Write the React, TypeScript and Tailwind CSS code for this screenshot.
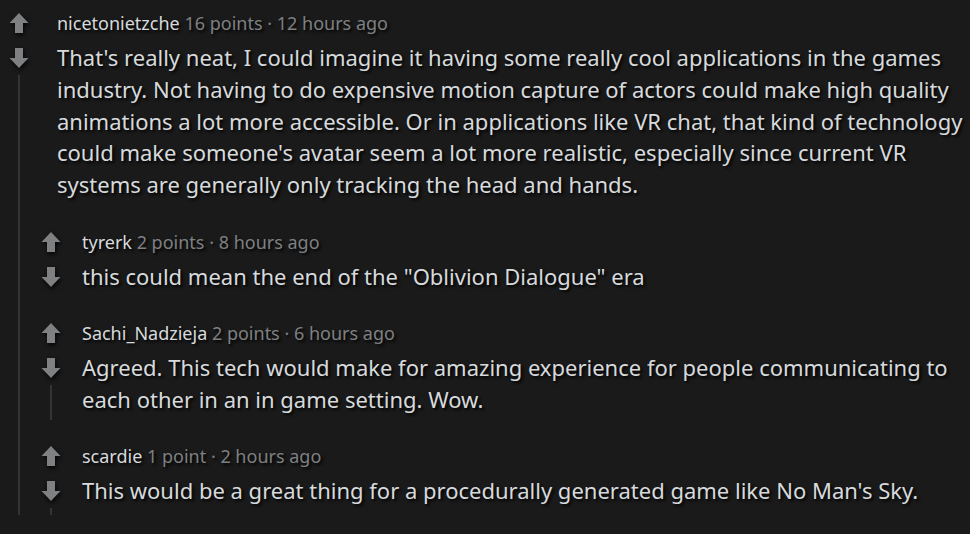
import React from 'react'

type Comment = {
  user: string
  points: string
  time: string
  body: string
  thread?: 'long' | 'stub' | 'none'
}

const reply: Comment[] = [
  {
    user: 'tyrerk',
    points: '2 points',
    time: '8 hours ago',
    body: 'this could mean the end of the "Oblivion Dialogue" era',
    thread: 'none',
  },
  {
    user: 'Sachi_Nadzieja',
    points: '2 points',
    time: '6 hours ago',
    body: 'Agreed. This tech would make for amazing experience for people communicating to each other in an in game setting. Wow.',
    thread: 'long',
  },
  {
    user: 'scardie',
    points: '1 point',
    time: '2 hours ago',
    body: "This would be a great thing for a procedurally generated game like No Man's Sky.",
    thread: 'stub',
  },
]

function UpArrow() {
  return (
    <svg width="20" height="22" viewBox="0 0 20 22" className="drop-shadow-[1px_2px_2px_rgba(0,0,0,0.9)]">
      <path d="M10 1 L19.5 11 L14 11 L14 21 L6 21 L6 11 L0.5 11 Z" fill="#7f8081" />
    </svg>
  )
}

function DownArrow() {
  return (
    <svg width="20" height="22" viewBox="0 0 20 22" className="drop-shadow-[1px_2px_2px_rgba(0,0,0,0.9)]">
      <path d="M10 21 L19.5 11 L14 11 L14 1 L6 1 L6 11 L0.5 11 Z" fill="#7f8081" />
    </svg>
  )
}

function Meta({ c }: { c: Comment }) {
  return (
    <div className="h-6 text-[18px] leading-6 whitespace-nowrap">
      <span className="text-[#d7dadc]">{c.user}</span>{' '}
      <span className="text-[#7e8081]">
        {c.points} · {c.time}
      </span>
    </div>
  )
}

function Votes() {
  return (
    <div className="flex flex-col items-center">
      <div className="h-6 flex items-center">
        <UpArrow />
      </div>
      <div className="mt-[7px] h-8 flex items-center">
        <DownArrow />
      </div>
    </div>
  )
}

function Reply({ c, last }: { c: Comment; last?: boolean }) {
  return (
    <div className={`flex ${last ? '' : 'pb-[24px]'}`}>
      <div className="w-[26px] flex flex-col items-center">
        <Votes />
        {c.thread === 'long' && <div className="mt-[1px] flex-1 w-[2px] bg-[#333435]" />}
        {c.thread === 'stub' && <div className="mt-[1px] h-[7px] w-[2px] bg-[#333435]" />}
      </div>
      <div className="ml-[18px] flex-1 min-w-0">
        <Meta c={c} />
        <p className="mt-[7px] text-[22px] leading-[31.5px] text-[#d7dadc] pb-[5px]">{c.body}</p>
      </div>
    </div>
  )
}

export default function App() {
  const top: Comment = {
    user: 'nicetonietzche',
    points: '16 points',
    time: '12 hours ago',
    body: "That's really neat, I could imagine it having some really cool applications in the games industry. Not having to do expensive motion capture of actors could make high quality animations a lot more accessible. Or in applications like VR chat, that kind of technology could make someone's avatar seem a lot more realistic, especially since current VR systems are generally only tracking the head and hands.",
  }

  return (
    <div
      className="w-[970px] h-[534px] overflow-hidden bg-[#1a1a1b] pt-[11px] [text-shadow:2px_2px_3px_rgba(0,0,0,0.95)]"
      style={{ fontFamily: '"Noto Sans", "Open Sans", sans-serif' }}
    >
      <div className="flex">
        <div className="w-[38px] flex flex-col items-center">
          <Votes />
          <div className="mt-[1px] flex-1 w-[2px] bg-[#333435]" />
        </div>
        <div className="flex-1 min-w-0">
          <div className="ml-[19px] pb-[29px]">
            <Meta c={top} />
            <p className="mt-[7px] text-[22px] leading-[31.75px] text-[#d7dadc]">{top.body}</p>
          </div>
          {reply.map((c, i) => (
            <Reply key={c.user} c={c} last={i === reply.length - 1} />
          ))}
        </div>
      </div>
    </div>
  )
}
